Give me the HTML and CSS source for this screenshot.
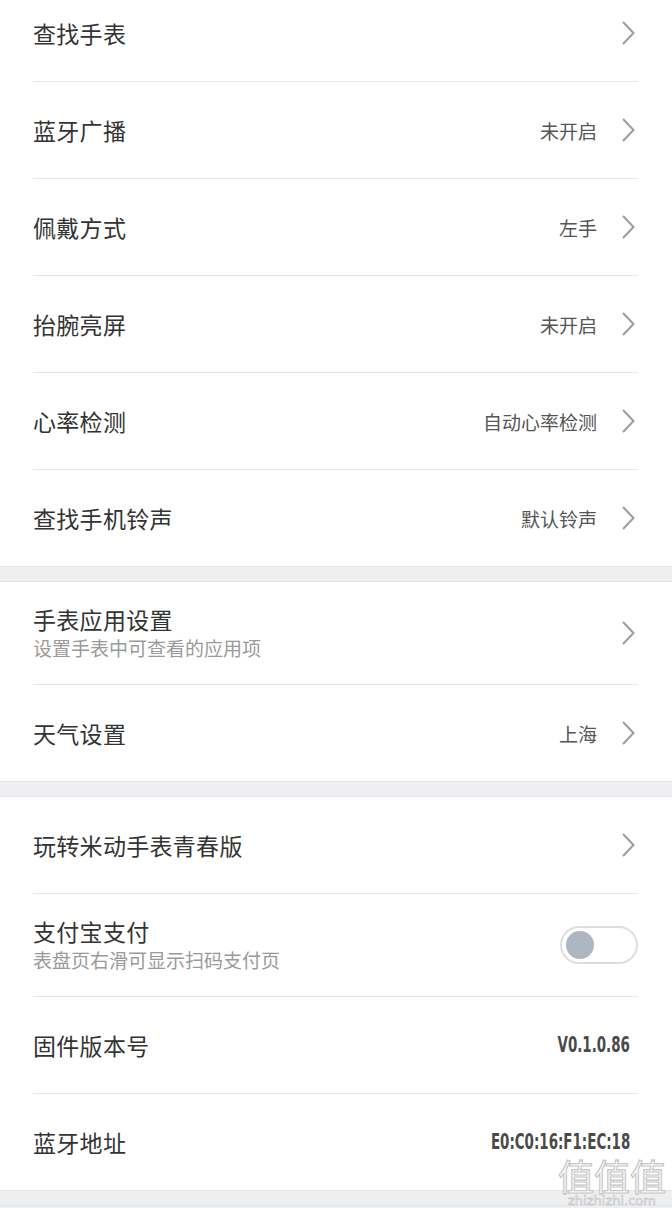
FILE: index.html
```html
<!DOCTYPE html>
<html lang="zh-CN">
<head>
<meta charset="UTF-8" />
<title>手表设置</title>
<link rel="stylesheet" href="styles.css">
</head>
<body>

<div class="settings">
	<div class="group">
		<div class="row">
			<div class="label"><div class="title">查找手表</div></div>
			<svg class="chevron" width="14" height="24" viewBox="0 0 14 24"><path d="M2 1 L12.5 12 L2 23" /></svg>
		</div>
		<div class="row">
			<div class="label"><div class="title">蓝牙广播</div></div>
			<span class="value">未开启</span>
			<svg class="chevron" width="14" height="24" viewBox="0 0 14 24"><path d="M2 1 L12.5 12 L2 23" /></svg>
		</div>
		<div class="row">
			<div class="label"><div class="title">佩戴方式</div></div>
			<span class="value">左手</span>
			<svg class="chevron" width="14" height="24" viewBox="0 0 14 24"><path d="M2 1 L12.5 12 L2 23" /></svg>
		</div>
		<div class="row">
			<div class="label"><div class="title">抬腕亮屏</div></div>
			<span class="value">未开启</span>
			<svg class="chevron" width="14" height="24" viewBox="0 0 14 24"><path d="M2 1 L12.5 12 L2 23" /></svg>
		</div>
		<div class="row">
			<div class="label"><div class="title">心率检测</div></div>
			<span class="value">自动心率检测</span>
			<svg class="chevron" width="14" height="24" viewBox="0 0 14 24"><path d="M2 1 L12.5 12 L2 23" /></svg>
		</div>
		<div class="row">
			<div class="label"><div class="title">查找手机铃声</div></div>
			<span class="value">默认铃声</span>
			<svg class="chevron" width="14" height="24" viewBox="0 0 14 24"><path d="M2 1 L12.5 12 L2 23" /></svg>
		</div>
	</div>

	<div class="gap"></div>

	<div class="group">
		<div class="row tall">
			<div class="label">
				<div class="title">手表应用设置</div>
				<div class="sub">设置手表中可查看的应用项</div>
			</div>
			<svg class="chevron" width="14" height="24" viewBox="0 0 14 24"><path d="M2 1 L12.5 12 L2 23" /></svg>
		</div>
		<div class="row">
			<div class="label"><div class="title">天气设置</div></div>
			<span class="value">上海</span>
			<svg class="chevron" width="14" height="24" viewBox="0 0 14 24"><path d="M2 1 L12.5 12 L2 23" /></svg>
		</div>
	</div>

	<div class="gap"></div>

	<div class="group">
		<div class="row">
			<div class="label"><div class="title">玩转米动手表青春版</div></div>
			<svg class="chevron" width="14" height="24" viewBox="0 0 14 24"><path d="M2 1 L12.5 12 L2 23" /></svg>
		</div>
		<div class="row tall">
			<div class="label">
				<div class="title">支付宝支付</div>
				<div class="sub">表盘页右滑可显示扫码支付页</div>
			</div>
			<div class="switch"><span class="knob"></span></div>
		</div>
		<div class="row">
			<div class="label"><div class="title">固件版本号</div></div>
			<span class="code">V0.1.0.86</span>
		</div>
		<div class="row">
			<div class="label"><div class="title">蓝牙地址</div></div>
			<span class="code">E0:C0:16:F1:EC:18</span>
		</div>
	</div>

	<div class="gap"></div>
</div>

<div class="watermark">
	<div class="mark">值值值</div>
	<div class="site">zhizhizhi.com</div>
</div>

</body>
</html>
```

FILE: styles.css
```css
html {
background:#eeeff1;
}
body {
margin:0;
height:1208px;
overflow:hidden;
position:relative;
font-family:"Noto Sans CJK SC","Noto Sans",sans-serif;
}
.settings {
margin-top:-15px;
}
.group {
background:#fff;
padding:0 34px 0 33px;
}
.gap {
height:16px;
background:#eeeff1;
border-top:1px solid #e4e4e6;
border-bottom:1px solid #e4e4e6;
box-sizing:border-box;
}
.row {
display:flex;
align-items:center;
height:96px;
border-bottom:1px solid #e7e7e7;
}
.row:last-child {
border-bottom:none;
}
.row.tall {
height:102px;
}
.label {
flex:1;
}
.title {
font-size:23px;
line-height:30px;
color:#333;
letter-spacing:.3px;
}
.sub {
font-size:19px;
line-height:28px;
color:#9a9a9a;
}
.value {
font-size:19px;
color:#555;
margin-right:24px;
}
.chevron {
display:block;
margin-right:3px;
}
.chevron path {
fill:none;
stroke:#9c9c9c;
stroke-width:2;
}
.code {
display:inline-block;
font-family:"DejaVu Sans Condensed","DejaVu Sans",sans-serif;
font-size:21px;
font-weight:bold;
color:#4a4a4a;
margin-right:8px;
transform:scaleX(.71);
transform-origin:right center;
}
.switch {
width:78px;
height:38px;
border:2px solid #dedede;
border-radius:21px;
box-sizing:border-box;
display:flex;
align-items:center;
padding-left:4px;
}
.knob {
width:28px;
height:28px;
border-radius:50%;
background:#adb6c1;
}
.watermark {
position:absolute;
right:6px;
bottom:0;
text-align:center;
}
.watermark .mark {
font-size:36px;
line-height:38px;
color:#fff;
-webkit-text-stroke:1.2px #c6c6c6;
}
.watermark .site {
font-family:"DejaVu Sans",sans-serif;
font-size:13px;
line-height:14px;
color:#fff;
-webkit-text-stroke:.6px #bdbdbd;
}
```
